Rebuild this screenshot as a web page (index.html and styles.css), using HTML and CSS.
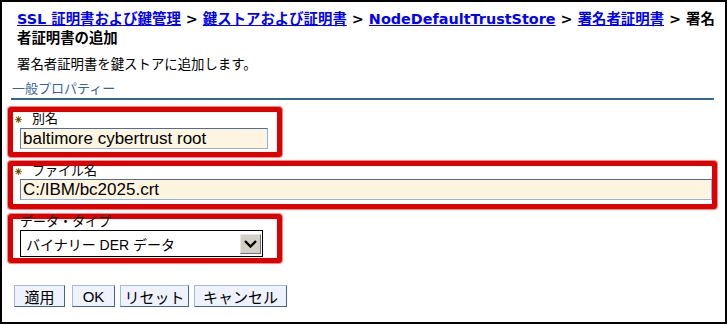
FILE: index.html
```html
<!DOCTYPE html>
<html lang="ja">
<head>
    <meta charset="UTF-8">
    <title>署名者証明書の追加</title>
    <link rel="stylesheet" href="styles.css">
</head>
<body>
<div class="frame">
    <div class="crumbs">
        <a href="#">SSL 証明書および鍵管理</a> &gt; <a href="#">鍵ストアおよび証明書</a> &gt; <a href="#">NodeDefaultTrustStore</a> &gt; <a href="#">署名者証明書</a> &gt; 署名者証明書の追加
    </div>
    <p class="desc">署名者証明書を鍵ストアに追加します。</p>
    <div class="section">一般プロパティー</div>

    <div class="field field-alias">
        <div class="field-label">
            <svg class="req" width="7" height="7" viewBox="0 0 7 7">
                <path d="M3.5 0V7M0 3.5H7M1 1L6 6M6 1L1 6" stroke="#a07f30" stroke-width="1.2"/>
                <rect x="2.3" y="2.3" width="2.4" height="2.4" fill="#4e3a0c"/>
            </svg>別名
        </div>
        <input class="text-input alias-input" type="text" value="baltimore cybertrust root">
    </div>

    <div class="field field-file">
        <div class="field-label">
            <svg class="req" width="7" height="7" viewBox="0 0 7 7">
                <path d="M3.5 0V7M0 3.5H7M1 1L6 6M6 1L1 6" stroke="#a07f30" stroke-width="1.2"/>
                <rect x="2.3" y="2.3" width="2.4" height="2.4" fill="#4e3a0c"/>
            </svg>ファイル名
        </div>
        <input class="text-input file-input" type="text" value="C:/IBM/bc2025.crt">
    </div>

    <div class="field field-type">
        <div class="field-label plain">データ・タイプ</div>
        <div class="select">
            <span class="select-text">バイナリー DER データ</span>
            <span class="select-btn">
                <svg width="13" height="8" viewBox="0 0 13 8">
                    <path d="M1 1L6.5 6.5L12 1" fill="none" stroke="#000" stroke-width="2.4"/>
                </svg>
            </span>
        </div>
    </div>

    <div class="buttons">
        <button class="btn btn-apply">適用</button>
        <button class="btn btn-ok">OK</button>
        <button class="btn btn-reset">リセット</button>
        <button class="btn btn-cancel">キャンセル</button>
    </div>
</div>
</body>
</html>
```

FILE: styles.css
```css
* {
    padding: 0;
    margin: 0;
    box-sizing: border-box;
}

body {
    font-family: "Liberation Sans", "Noto Sans CJK JP", sans-serif;
    font-size: 13px;
    color: #000;
    background: #fff;
}

.frame {
    width: 727px;
    height: 324px;
    border: 2px solid #000;
    overflow: hidden;
}

.crumbs {
    padding: 8px 5px 0 15px;
    font-family: "DejaVu Sans", "Noto Sans CJK JP", sans-serif;
    font-size: 14.4px;
    font-weight: bold;
    line-height: 19px;
}

.crumbs a {
    color: #0000ff;
}

.desc {
    margin: 8px 0 0 15px;
    font-size: 13.4px;
    line-height: 17px;
}

.section {
    margin: 7px 11px 0 9px;
    padding: 0 0 1px 1px;
    color: #336699;
    line-height: 17px;
    border-bottom: 2px solid #336699;
}

.field {
    margin-left: 6px;
    padding: 0 0 3px 2px;
    border: 5px solid #dd0000;
    border-radius: 3px;
    box-shadow: 0 0 0 1px #f08a8a;
}

.field-label {
    display: flex;
    align-items: center;
    height: 14px;
    line-height: 14px;
}

.req {
    margin-right: 10px;
    flex: none;
}

.field-label.plain {
    margin-left: 5px;
}

.text-input {
    display: block;
    height: 21px;
    margin-left: 5px;
    padding: 0 2px;
    font-family: "Liberation Sans", sans-serif;
    font-size: 17px;
    color: #000;
    background: #fdf5e0;
    border: 1px solid;
    border-color: #4d6f9b #8fb3dc #8fb3dc #5a7fae;
    outline: none;
}

.field-alias {
    width: 274px;
    margin-top: 7px;
}

.field-alias .text-input {
    width: 248px;
    margin-top: 2px;
}

.field-file {
    width: 709px;
    margin-top: 4px;
    padding-bottom: 4px;
}

.field-file .field-label {
    margin-top: -2px;
}

.field-file .text-input {
    width: 692px;
    margin-top: 1px;
}

.field-type {
    width: 274px;
    margin-top: 5px;
    padding-bottom: 1px;
}

.field-type .field-label {
    margin-top: -4px;
}

.select {
    display: flex;
    align-items: center;
    justify-content: space-between;
    width: 243px;
    height: 27px;
    margin: 1px 0 0 5px;
    padding: 0 1px 0 5px;
    border: 1px solid #000;
    background: #fff;
    font-size: 14px;
}

.select-btn {
    display: flex;
    align-items: center;
    justify-content: center;
    width: 21px;
    height: 20px;
    background: #d4d0c8;
    border: 1px solid;
    border-color: #e8e6e2 #707070 #707070 #e8e6e2;
}

.buttons {
    display: flex;
    gap: 5px;
    margin: 22px 0 0 12px;
}

.btn {
    height: 22px;
    font-family: "Liberation Sans", "Noto Sans CJK JP", sans-serif;
    font-size: 15px;
    color: #000;
    text-align: center;
    background: #eef2fd;
    border: 1px solid;
    border-color: #a3b9da #3f6596 #3f6596 #a3b9da;
}

.btn-apply {
    width: 51px;
    margin-right: 2px;
}

.btn-ok {
    width: 43px;
}

.btn-reset {
    width: 69px;
}

.btn-cancel {
    width: 93px;
}
```
